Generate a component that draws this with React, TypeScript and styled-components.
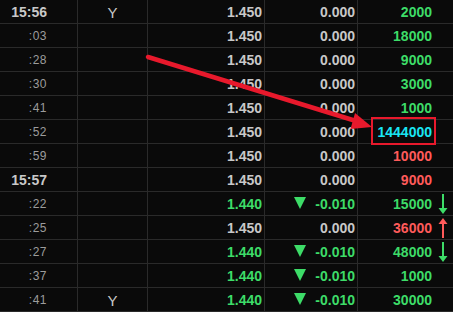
import styled, { createGlobalStyle } from "styled-components";

const GlobalStyle = createGlobalStyle`
  html, body {
    margin: 0;
    padding: 0;
    background: #0a0a0a;
  }
  body {
    font-family: "Liberation Sans", Arial, sans-serif;
  }
`;

const COLORS = {
  gray: "#c8c8c8",
  green: "#3ddc68",
  red: "#ff5a5a",
  cyan: "#19e6f5",
};

type Tone = keyof typeof COLORS;

interface ITick {
  time: string;
  major?: boolean;
  flag?: string;
  price: string;
  change: string;
  tone: Tone;
  vol: string;
  volTone: Tone;
  dir?: "up" | "down";
}

const ticks: ITick[] = [
  { time: "15:56", major: true, flag: "Y", price: "1.450", change: "0.000", tone: "gray", vol: "2000", volTone: "green" },
  { time: ":03", price: "1.450", change: "0.000", tone: "gray", vol: "18000", volTone: "green" },
  { time: ":28", price: "1.450", change: "0.000", tone: "gray", vol: "9000", volTone: "green" },
  { time: ":30", price: "1.450", change: "0.000", tone: "gray", vol: "3000", volTone: "green" },
  { time: ":41", price: "1.450", change: "0.000", tone: "gray", vol: "1000", volTone: "green" },
  { time: ":52", price: "1.450", change: "0.000", tone: "gray", vol: "1444000", volTone: "cyan" },
  { time: ":59", price: "1.450", change: "0.000", tone: "gray", vol: "10000", volTone: "red" },
  { time: "15:57", major: true, price: "1.450", change: "0.000", tone: "gray", vol: "9000", volTone: "red" },
  { time: ":22", price: "1.440", change: "-0.010", tone: "green", vol: "15000", volTone: "green", dir: "down" },
  { time: ":25", price: "1.450", change: "0.000", tone: "gray", vol: "36000", volTone: "red", dir: "up" },
  { time: ":27", price: "1.440", change: "-0.010", tone: "green", vol: "48000", volTone: "green", dir: "down" },
  { time: ":37", price: "1.440", change: "-0.010", tone: "green", vol: "1000", volTone: "green" },
  { time: ":41", flag: "Y", price: "1.440", change: "-0.010", tone: "green", vol: "30000", volTone: "green" },
];

const Board = styled.div`
  position: relative;
  width: 453px;
  height: 312px;
  overflow: hidden;
  background: #0a0a0a;
`;

const Row = styled.div`
  display: grid;
  grid-template-columns: 78px 70px 117px 93px 1fr;
  height: 24px;
  box-sizing: border-box;
  border-bottom: 1px solid #2a2a2a;
`;

const Cell = styled.div<{ $tone?: Tone }>`
  display: flex;
  align-items: center;
  justify-content: flex-end;
  gap: 9px;
  box-sizing: border-box;
  padding: 1px 2px 0 0;
  border-right: 1px solid #2a2a2a;
  font-size: 14px;
  font-weight: bold;
  color: ${(p) => COLORS[p.$tone || "gray"]};
  white-space: nowrap;
`;

const TimeCell = styled(Cell)<{ $major?: boolean }>`
  padding-right: 30px;
  font-size: ${(p) => (p.$major ? "14px" : "12px")};
  font-weight: ${(p) => (p.$major ? "bold" : "normal")};
  color: ${(p) => (p.$major ? "#c8c8c8" : "#9c9c9c")};
  letter-spacing: ${(p) => (p.$major ? "0" : "0.5px")};
`;

const FlagCell = styled(Cell)`
  justify-content: center;
  padding-right: 0;
  font-weight: normal;
  font-size: 15px;
  color: #c8c8c8;
`;

const VolCell = styled(Cell)`
  border-right: none;
  gap: 6px;
  padding-right: 5px;
`;

const ArrowSlot = styled.span`
  display: flex;
  width: 10px;
  height: 22px;
`;

const DownTriangle = styled.svg`
  width: 12px;
  height: 12px;
  margin-top: -2px;
`;

const Annotation = styled.svg`
  position: absolute;
  left: 0;
  top: 0;
  pointer-events: none;
`;

const TickArrow = ({ dir }: { dir: "up" | "down" }) => {
  const color = dir === "down" ? COLORS.green : COLORS.red;
  return (
    <svg width="10" height="22" viewBox="0 0 10 22">
      {dir === "down" ? (
        <>
          <rect x="4" y="1" width="2" height="16" fill={color} />
          <polygon points="0.5,15 9.5,15 5,21" fill={color} />
        </>
      ) : (
        <>
          <rect x="4" y="5" width="2" height="16" fill={color} />
          <polygon points="0.5,7 9.5,7 5,1" fill={color} />
        </>
      )}
    </svg>
  );
};

const App = () => {
  return (
    <>
      <GlobalStyle />
      <Board>
        {ticks.map((t, i) => (
          <Row key={i}>
            <TimeCell $major={t.major}>{t.time}</TimeCell>
            <FlagCell>{t.flag}</FlagCell>
            <Cell $tone={t.tone}>{t.price}</Cell>
            <Cell $tone={t.tone}>
              {t.change.startsWith("-") && (
                <DownTriangle viewBox="0 0 12 12">
                  <polygon points="0,0 12,0 6,12" fill={COLORS.green} />
                </DownTriangle>
              )}
              {t.change}
            </Cell>
            <VolCell $tone={t.volTone}>
              {t.vol}
              <ArrowSlot>{t.dir && <TickArrow dir={t.dir} />}</ArrowSlot>
            </VolCell>
          </Row>
        ))}
        <Annotation width="453" height="312" viewBox="0 0 453 312">
          <line
            x1="148"
            y1="57"
            x2="356"
            y2="121"
            stroke="#e8192c"
            strokeWidth="4.5"
            strokeLinecap="round"
          />
          <polygon points="372,127 355,113 350.5,129" fill="#e8192c" />
          <rect
            x="372"
            y="118"
            width="63"
            height="26"
            fill="none"
            stroke="#e8192c"
            strokeWidth="2"
          />
        </Annotation>
      </Board>
    </>
  );
};

export default App;
